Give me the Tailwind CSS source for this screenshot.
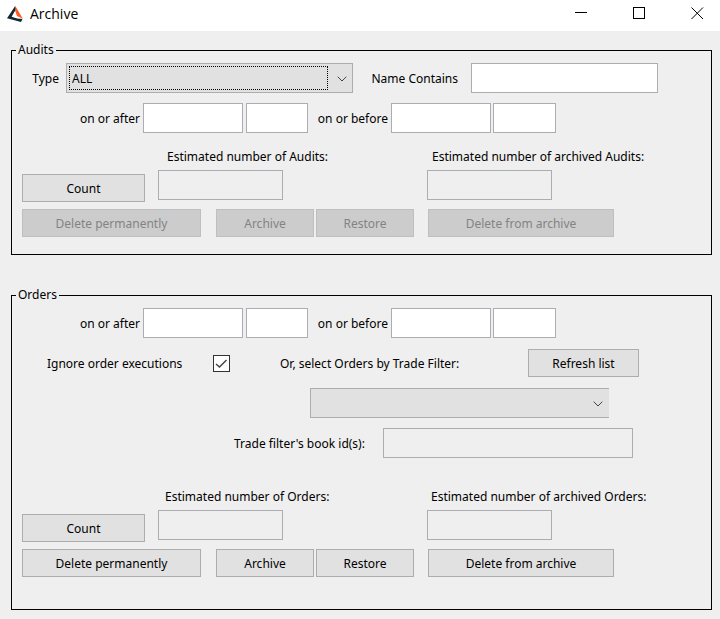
<!doctype html>
<html lang="en">

<head>
  <meta charset="utf-8">
  <meta name="viewport" content="width=device-width, initial-scale=1">
  <title>Archive</title>
  <script src="https://cdn.jsdelivr.net/npm/@tailwindcss/browser@4"></script>
</head>

<body class="min-h-screen flex flex-col bg-[#efefef] text-black text-xs font-['Noto_Sans',sans-serif]">
<header class="flex items-center h-[31px] pl-[7px] pr-px pb-1 bg-white">
  <svg viewBox="0 0 16 16" class="size-4 shrink-0" aria-hidden="true">
    <path d="M8.200 0 0 12.200l14 3.800 1.500-3-5.300-.6-5.600-1.600L9 3z" fill="#12262f" />
    <path d="M8.800.8 15.800 12.800 10 10 8 4.500z" fill="#ff5a1f" />
  </svg>
  <h1 class="ml-[7px] text-sm leading-5 font-['Open_Sans',sans-serif]">Archive</h1>
  <div class="flex gap-[14px] ml-auto">
    <button type="button" aria-label="Minimize" class="flex items-center justify-center w-11 h-6">
      <svg viewBox="0 0 13 13" class="size-[13px]" fill="none" stroke="#000" shape-rendering="crispEdges"><path d="M0 5.500h12" /></svg>
    </button>
    <button type="button" aria-label="Maximize" class="flex items-center justify-center w-11 h-6">
      <svg viewBox="0 0 13 13" class="size-[13px]" fill="none" stroke="#000" shape-rendering="crispEdges"><path d="M.5.5h11v11H.5z" /></svg>
    </button>
    <button type="button" aria-label="Close" class="flex items-center justify-center w-11 h-6">
      <svg viewBox="0 0 13 13" class="size-[13px]" fill="none" stroke="#000"><path d="M.5.5l11.500 11.500M12 .5.5 12" /></svg>
    </button>
  </div>
</header>

<main class="flex-grow pt-[11px] pl-[11px] pr-2 pb-2">
  <!-- Audits -->
  <fieldset class="border border-black pl-[10px] pb-[17px]">
    <legend class="-ml-[6px] px-[2px] leading-4">Audits</legend>

    <div class="flex items-center pt-[5px]">
      <label for="audit-type" class="w-[37px] pt-[2px] text-right">Type</label>
      <div class="relative ml-[7px]">
        <select id="audit-type" class="block appearance-none w-[287px] h-[30px] pt-[2px] pl-[5px] border border-[#adadad] bg-[#e1e1e1] outline-none">
          <option>ALL</option>
        </select>
        <span class="absolute top-[3px] bottom-[3px] left-[3px] right-[25px] border border-dotted border-black pointer-events-none"></span>
        <svg viewBox="0 0 10 6" class="absolute right-[6px] top-[13px] w-[10px] h-[6px] pointer-events-none" fill="none" stroke="#444"><path d="M.7.7 5 5 9.300.7" /></svg>
      </div>
      <label for="audit-name" class="w-[105px] pt-[2px] text-right">Name Contains</label>
      <input id="audit-name" type="text" class="ml-[13px] w-[187px] h-[30px] border border-[#abadb3] bg-white">
    </div>

    <div class="flex items-center mt-[10px]">
      <label for="audit-after" class="w-[118px] pt-[2px] text-right">on or after</label>
      <input id="audit-after" type="text" class="ml-[3px] w-[100px] h-[30px] border border-[#abadb3] bg-white">
      <input type="text" aria-label="Audits after, time" class="ml-[3px] w-[62px] h-[30px] border border-[#abadb3] bg-white">
      <label for="audit-before" class="w-20 pt-[2px] text-right">on or before</label>
      <input id="audit-before" type="text" class="ml-[3px] w-[100px] h-[30px] border border-[#abadb3] bg-white">
      <input type="text" aria-label="Audits before, time" class="ml-[2px] w-[63px] h-[30px] border border-[#abadb3] bg-white">
    </div>

    <div class="flex items-end mt-4">
      <button type="button" class="w-[123px] h-7 pt-[2px] border border-[#adadad] bg-[#e1e1e1]">Count</button>
      <div class="ml-[13px] w-[269px] pb-[2px]">
        <label for="audit-count" class="block pl-[9px] leading-4">Estimated number of Audits:</label>
        <input id="audit-count" type="text" readonly class="block mt-[5px] w-[125px] h-[30px] border border-[#abadb3]">
      </div>
      <div class="pb-[2px]">
        <label for="audit-archived" class="block pl-[5px] leading-4">Estimated number of archived Audits:</label>
        <input id="audit-archived" type="text" readonly class="block mt-[5px] w-[125px] h-[30px] border border-[#abadb3]">
      </div>
    </div>

    <div class="flex mt-[7px]">
      <button type="button" disabled class="w-[179px] h-7 pt-[2px] border border-[#bfbfbf] bg-[#cccccc] text-[#838383]">Delete permanently</button>
      <button type="button" disabled class="ml-[15px] w-[98px] h-7 pt-[2px] border border-[#bfbfbf] bg-[#cccccc] text-[#838383]">Archive</button>
      <button type="button" disabled class="ml-[2px] w-[98px] h-7 pt-[2px] border border-[#bfbfbf] bg-[#cccccc] text-[#838383]">Restore</button>
      <button type="button" disabled class="ml-[14px] w-[186px] h-7 pt-[2px] border border-[#bfbfbf] bg-[#cccccc] text-[#838383]">Delete from archive</button>
    </div>
  </fieldset>

  <!-- Orders -->
  <fieldset class="mt-8 border border-black pl-[10px] pb-8">
    <legend class="-ml-[6px] px-[2px] leading-4">Orders</legend>

    <div class="flex items-center pt-[5px]">
      <label for="order-after" class="w-[118px] pt-[2px] text-right">on or after</label>
      <input id="order-after" type="text" class="ml-[3px] w-[100px] h-[30px] border border-[#abadb3] bg-white">
      <input type="text" aria-label="Orders after, time" class="ml-[3px] w-[62px] h-[30px] border border-[#abadb3] bg-white">
      <label for="order-before" class="w-20 pt-[2px] text-right">on or before</label>
      <input id="order-before" type="text" class="ml-[3px] w-[100px] h-[30px] border border-[#abadb3] bg-white">
      <input type="text" aria-label="Orders before, time" class="ml-[2px] w-[63px] h-[30px] border border-[#abadb3] bg-white">
    </div>

    <div class="flex items-center mt-[11px]">
      <label for="ignore-executions" class="w-[191px] pt-[2px] pl-[25px]">Ignore order executions</label>
      <div class="relative size-[17px]">
        <input id="ignore-executions" type="checkbox" checked class="block appearance-none size-[17px] border border-[#333] bg-white">
        <svg viewBox="0 0 17 17" class="absolute inset-0 size-[17px] pointer-events-none" fill="none" stroke="#444" stroke-width="1.500"><path d="M3 9 6.500 12 13.500 5" /></svg>
      </div>
      <label for="trade-filter" class="ml-[50px] w-[248px] pt-[2px]">Or, select Orders by Trade Filter:</label>
      <button type="button" class="w-[111px] h-7 pt-[2px] border border-[#adadad] bg-[#e1e1e1]">Refresh list</button>
    </div>

    <div class="flex mt-[11px] pl-72">
      <div class="relative">
        <select id="trade-filter" class="block appearance-none w-[299px] h-[30px] border border-r-0 border-[#adadad] bg-[#e1e1e1]">
          <option></option>
        </select>
        <svg viewBox="0 0 10 6" class="absolute right-[6px] top-[13px] w-[10px] h-[6px] pointer-events-none" fill="none" stroke="#444"><path d="M.7.7 5 5 9.300.7" /></svg>
      </div>
    </div>

    <div class="flex items-center mt-[10px]">
      <label for="book-ids" class="w-[349px] pt-[2px] pl-[212px]">Trade filter's book id(s):</label>
      <input id="book-ids" type="text" readonly class="ml-3 w-[250px] h-[30px] border border-[#abadb3]">
    </div>

    <div class="flex items-end mt-[31px]">
      <button type="button" class="w-[123px] h-7 pt-[2px] border border-[#adadad] bg-[#e1e1e1]">Count</button>
      <div class="ml-[13px] w-[269px] pb-[2px]">
        <label for="order-count" class="block pl-[7px] leading-4">Estimated number of Orders:</label>
        <input id="order-count" type="text" readonly class="block mt-[5px] w-[125px] h-[30px] border border-[#abadb3]">
      </div>
      <div class="pb-[2px]">
        <label for="order-archived" class="block pl-1 leading-4">Estimated number of archived Orders:</label>
        <input id="order-archived" type="text" readonly class="block mt-[5px] w-[125px] h-[30px] border border-[#abadb3]">
      </div>
    </div>

    <div class="flex mt-[7px]">
      <button type="button" class="w-[179px] h-7 pt-[2px] border border-[#adadad] bg-[#e1e1e1]">Delete permanently</button>
      <button type="button" class="ml-[15px] w-[98px] h-7 pt-[2px] border border-[#adadad] bg-[#e1e1e1]">Archive</button>
      <button type="button" class="ml-[2px] w-[98px] h-7 pt-[2px] border border-[#adadad] bg-[#e1e1e1]">Restore</button>
      <button type="button" class="ml-[14px] w-[186px] h-7 pt-[2px] border border-[#adadad] bg-[#e1e1e1]">Delete from archive</button>
    </div>
  </fieldset>
</main>
</body>

</html>
